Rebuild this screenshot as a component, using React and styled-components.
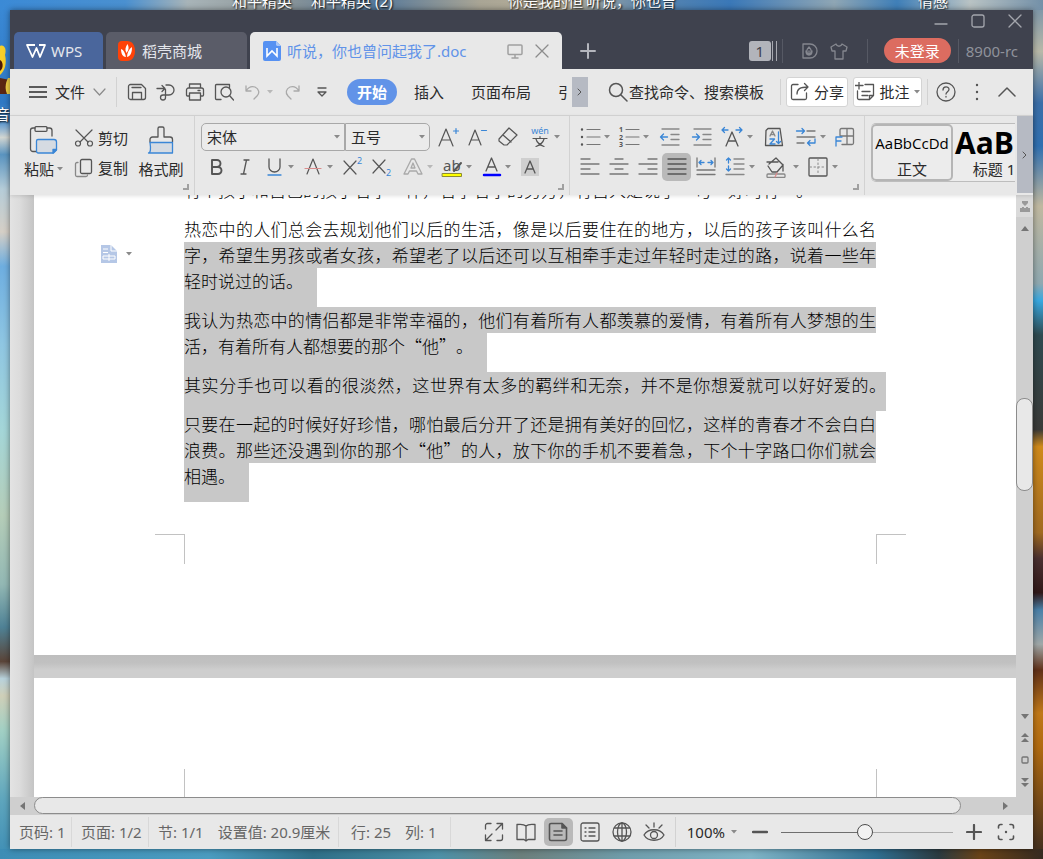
import React from 'react';
import styled, { createGlobalStyle, css } from 'styled-components';

const color = {
  titleBar: '#3f424e',
  chrome: '#e8e8e8',
  line: '#d2d2d2',
  ink: '#2b2b2b',
  icon: '#555',
  muted: '#a9a9a9',
  blue: '#3a86d6',
  accent: '#6193e8',
  pressed: '#b9b9b9',
  selection: '#c8c8c8',
};

const GlobalStyle = createGlobalStyle`
  *, *::before, *::after { box-sizing: border-box; }

  body {
    margin: 0;
    font-family: "Noto Sans", "Noto Sans CJK SC", sans-serif;
    font-size: 15px;
    line-height: 20px;
    color: ${color.ink};
  }

  button, input, select {
    font: inherit;
    color: inherit;
  }

  button {
    margin: 0;
    padding: 0;
    border: 0;
    background: none;
    white-space: nowrap;
    cursor: pointer;
  }

  svg { display: block; flex: none; }
`;

/* ---------- desktop and window ---------- */

const Desktop = styled.div`
  position: relative;
  min-height: 100vh;
  display: flex;
  padding: 10px;
  overflow: hidden;
  background:
    linear-gradient(90deg, #3b8ad6 0%, #4a90d0 12%, #a8b4b8 18%, #8d9698 27%, #55789a 36%, #a9a595 46%, #b8b09a 54%, #5c86ad 62%, #3a78b8 70%, #8fa6b4 80%, #3f7fb8 86%, #b9c3c4 93%, #7390a8 100%) top / 100% 10px no-repeat,
    linear-gradient(90deg, #3d8db5 0%, #4b9cc0 20%, #2f6f88 30%, #4d91a8 42%, #6c7f7c 50%, #6f9dab 60%, #7fb4c6 72%, #2f6e90 84%, #2b3a40 90%, #6a4318 94%, #352a20 100%) bottom / 100% 10px no-repeat,
    linear-gradient(180deg, #3b8ad6 0%, #2f78c4 12%, #4a8ecf 14%, #d2d6d2 16%, #5a94c0 18%, #b5ccd8 22%, #d5cfc6 27%, #6eaee0 31%, #8fc6e2 40%, #a4d6d8 50%, #b5cdb8 60%, #93b8b4 68%, #4f8296 73%, #5a4438 77%, #b8d2dc 79%, #cfcfb8 81%, #a2d0c4 85%, #5fa6bd 93%, #3d8db5 100%) left / 10px 100% no-repeat,
    linear-gradient(180deg, #7390a8 0%, #b8b8a8 6%, #3a6ea8 12%, #2f6fb0 17%, #c0b8a0 24%, #8fa8b0 33%, #38a8e0 35%, #2f4a50 39%, #3a3a38 50%, #d08a1a 52%, #a06a20 62%, #4a3030 65%, #301818 69%, #4a80a8 71%, #a0a8a8 75%, #603018 78%, #c07818 83%, #b06a10 87%, #3a2a20 100%) right / 10px 100% no-repeat,
    #3d8db5;
`;

const ShortcutLabel = styled.span`
  position: absolute;
  top: -9px;
  left: ${({ $left }) => $left};
  color: #fff;
  text-shadow: 1px 1px 2px #000;
  white-space: nowrap;
`;

const Sticker = styled.svg`
  position: absolute;
  top: 44px;
  left: 0;
`;

const SideLabel = styled(ShortcutLabel)`
  top: 104px;
`;

const AppWindow = styled.div`
  position: relative;
  flex: 1;
  min-width: 0;
  display: flex;
  flex-direction: column;
  background: ${color.chrome};
  box-shadow: 0 0 6px rgba(0, 0, 0, 0.45);
`;

const IconButton = styled.button`
  flex: none;
  display: flex;
  align-items: center;
  justify-content: center;
  width: ${({ $w }) => $w || 29}px;
  height: ${({ $h }) => $h || 28}px;
  color: ${({ $dim }) => ($dim ? color.muted : color.icon)};
  border-radius: 5px;
  ${({ $on }) => $on && css`background: ${color.pressed};`}
`;

const CaretButton = styled(IconButton)`
  width: 10px;
  justify-content: flex-start;
  opacity: ${({ $dim }) => ($dim ? 0.5 : 1)};
`;

const Divider = styled.span`
  flex: none;
  width: 1px;
  height: ${({ $h }) => $h || 30}px;
  background: ${({ $c }) => $c || color.line};
`;

/* ---------- title bar ---------- */

const TitleBar = styled.header`
  flex: none;
  background: ${color.titleBar};
`;

const WindowControls = styled.div`
  display: flex;
  justify-content: flex-end;

  button {
    width: 37px;
    height: 22px;
    color: #a4a6ad;
  }
`;

const TabStrip = styled.div`
  display: flex;
  gap: 3px;
  height: 37px;
  padding-left: 4px;
`;

const Tab = styled.button`
  flex: none;
  display: flex;
  align-items: center;
  gap: ${({ $gap }) => $gap}px;
  width: ${({ $w }) => $w}px;
  padding: 0 12px;
  border-radius: 5px 5px 0 0;
  background: ${({ $bg }) => $bg};
  color: #e4e6ec;
`;

const ActiveTab = styled.div`
  flex: none;
  display: flex;
  align-items: center;
  width: 312px;
  padding: 0 7px 0 13px;
  border-radius: 5px 5px 0 0;
  background: ${color.chrome};
  color: ${color.accent};

  span {
    flex: 1;
    padding-left: 6px;
    white-space: nowrap;
  }

  button { width: 27px; color: #8c8c8c; }
`;

const NewTab = styled(IconButton)`
  width: 46px;
  height: 37px;
  color: #b4b6bd;
`;

const Account = styled.div`
  display: flex;
  align-items: center;
  margin-left: auto;
  padding-right: 15px;
  color: #8f929b;

  button { color: #85878f; }
`;

const Extras = styled.div`
  display: flex;
  padding: 0 13px;
`;

const TabCount = styled.button`
  width: 22px;
  height: 20px;
  border-radius: 3px;
  background: #b2b4bb;

  && { color: ${color.titleBar}; }
`;

const CountBars = styled.span`
  width: 5px;
  height: 20px;
  margin: 0 5px 0 1px;
  border: solid #a6a8b0;
  border-width: 0 1px;
`;

const LoginButton = styled.button`
  width: 67px;
  height: 25px;
  margin: 0 7px 0 16px;
  border-radius: 13px;
  background: #dc6c60;

  && { color: #fff; }
`;

const Version = styled.span`
  padding-left: 7px;
`;

/* ---------- menu row ---------- */

const MenuRow = styled.div`
  flex: none;
  display: flex;
  align-items: center;
  height: 47px;
  padding-right: 9px;
  border-bottom: 1px solid #d6d6d6;
`;

const FileMenu = styled.button`
  flex: none;
  display: flex;
  align-items: center;
  gap: 8px;
  width: 106px;
  height: 30px;
  padding-left: 19px;
`;

const QuickAccess = styled.div`
  flex: none;
  display: flex;
  align-items: center;
  padding: 0 10px 0 5px;
`;

const RibbonTabs = styled.nav`
  flex: 1;
  min-width: 0;
  display: flex;
  align-items: center;
  gap: 27px;
  overflow: hidden;
`;

const CurrentTab = styled.button`
  flex: none;
  width: 50px;
  height: 26px;
  margin-right: -10px;
  border-radius: 13px;
  background: ${color.accent};
  color: #fff;
  font-weight: 700;
`;

const Scroller = styled.button`
  flex: none;
  display: flex;
  align-items: center;
  justify-content: center;
  width: 16px;
  height: ${({ $h }) => $h};
  margin-left: ${({ $ml }) => $ml || 0}px;
  background: #b6bac3;
  color: #555;
`;

const Search = styled.label`
  flex: none;
  display: flex;
  align-items: center;
  gap: 1px;
  width: 158px;
  margin: 0 14px 0 20px;
  color: ${color.icon};

  input {
    flex: 1;
    min-width: 0;
    padding: 0;
    border: 0;
    outline: 0;
    background: none;
    color: ${color.ink};
  }

  input::placeholder { color: ${color.ink}; opacity: 1; }
`;

const BoxButton = styled.button`
  flex: none;
  display: flex;
  align-items: center;
  justify-content: center;
  gap: 4px;
  width: ${({ $w }) => $w}px;
  height: 30px;
  margin-left: 5px;
  border: 1px solid #d4d4d4;
  border-radius: 3px;
  background: #fff;

  svg { color: ${color.icon}; }
`;

const RightMenu = styled.div`
  flex: none;
  display: flex;
  align-items: center;
  padding-left: 5px;
`;

/* ---------- ribbon ---------- */

const Ribbon = styled.div`
  flex: none;
  display: flex;
  height: 79px;
  position: relative;
  z-index: 1;
  background: ${color.chrome};
  box-shadow: 0 1px 4px rgba(0, 0, 0, 0.12);
`;

const Group = styled.div`
  flex: none;
  position: relative;
  display: flex;
  padding: 7px ${({ $pr }) => $pr || 0}px 0 ${({ $pl }) => $pl || 0}px;
  border-right: 1px solid ${color.line};
`;

const Launcher = styled.button`
  position: absolute;
  right: 5px;
  bottom: 5px;
  width: 6px;
  height: 6px;
  border: solid #a0a0a0;
  border-width: 0 2px 2px 0;
`;

const BigTool = styled.button`
  display: flex;
  flex-direction: column;
  align-items: center;
  gap: 5px;
  width: ${({ $w }) => $w}px;
  padding-top: 3px;
  color: ${color.icon};

  > span {
    display: flex;
    align-items: center;
    gap: 3px;
    color: ${color.ink};
  }
`;

const SmallTools = styled.div`
  padding-left: 7px;
`;

const SmallTool = styled.button`
  display: flex;
  align-items: center;
  gap: 4px;
  height: 30px;

  svg { color: ${color.icon}; }
`;

const Rows = styled.div`
  display: flex;
  flex-direction: column;
  gap: 2px;
`;

const Row = styled.div`
  display: flex;
  align-items: center;
  height: 28px;
`;

const Picker = styled.label`
  position: relative;
  flex: none;
  width: ${({ $w }) => $w}px;

  select {
    display: block;
    width: 100%;
    height: 28px;
    padding: 0 5px;
    appearance: none;
    border: 1px solid #a8a8a8;
    border-radius: ${({ $r }) => $r};
    background: #ebebeb;
    outline: 0;
  }

  & + & select {
    padding: 0 3px;
    border-left: 0;
  }

  svg {
    position: absolute;
    top: 12px;
    right: 5px;
  }
`;

const ToolSet = styled.div`
  display: flex;
  padding-left: 3px;
`;

const Styles = styled.div`
  flex: 1;
  min-width: 0;
  display: flex;
  height: 59px;
  margin: 7px 2px 0 6px;
  border: solid #bdbdbd;
  border-width: 1px 0;
  border-radius: 5px 0 0 5px;
  background: #ececec;
  overflow: hidden;
`;

const StyleCard = styled.button`
  flex: none;
  display: flex;
  flex-direction: column;
  align-items: center;
  width: 82px;
  border: ${({ $on }) => ($on ? '2px solid #b5b5b5' : '2px solid transparent')};
  border-radius: 5px;

  strong, em {
    display: flex;
    align-items: center;
    height: 33px;
    color: #000;
    font-family: "Open Sans", "Noto Sans", sans-serif;
    font-style: normal;
  }

  em { font-size: 15px; }
  strong { font-size: 30px; }
`;

/* ---------- document ---------- */

const Workspace = styled.main`
  flex: 1;
  min-height: 0;
  display: flex;
`;

const Gutter = styled.div`
  flex: none;
  width: 24px;
  background: linear-gradient(90deg, #e3e3e3 0%, #dcdcdc 40%, #c4c4c4 100%);
`;

const Pages = styled.div`
  flex: 1;
  min-width: 0;
  height: 602px;
  min-height: 100%;
  display: flex;
  flex-direction: column;
  overflow: hidden;
`;

const Page = styled.article`
  flex: ${({ $fill }) => ($fill ? '1' : 'none')};
  display: grid;
  grid-template-columns: 150px minmax(0, 1fr) 140px;
  background: #fff;
`;

const PageGap = styled.div`
  flex: none;
  height: 23px;
  background: linear-gradient(180deg, #bebebe 0%, #c1c1c1 35%, #cecece 65%);
`;

const PageMargin = styled.aside`
  padding: 50px 0 0 67px;
`;

const LayoutHint = styled.button`
  display: flex;
  align-items: center;
  gap: 8px;
`;

// pulled up because the view is scrolled part of a line into the page
const PageBody = styled.div`
  margin-top: -18px;
  padding-bottom: 91px;
  font-family: "Noto Sans CJK SC", sans-serif;
  font-size: 17px;
  font-weight: 300;
  line-height: 26px;
  text-spacing-trim: space-all;
  color: #000;
`;

const Line = styled.div`
  display: ${({ $short }) => ($short ? 'table' : 'block')};
  white-space: nowrap;
  text-align-last: ${({ $short }) => ($short ? 'left' : 'justify')};
  padding-right: ${({ $short }) => ($short ? 14 : 0)}px;
  padding-bottom: ${({ $last }) => ($last ? 13 : 0)}px;
  margin-right: ${({ $hang }) => ($hang ? '-10px' : 0)};
  background: ${({ $sel }) => ($sel ? color.selection : 'none')};
`;

const CropMarks = styled.div`
  display: flex;
  justify-content: space-between;
  margin: 32px -30px 0 -29px;

  &::before, &::after {
    content: '';
    width: 30px;
    height: 30px;
    border: solid #c2c2c2;
  }

  &::before { border-width: 1px 1px 0 0; }
  &::after { border-width: 1px 0 0 1px; }
`;

const TopMarks = styled.div`
  grid-column: 2;
  margin: 91px -1px 0 0;
  border: solid #c2c2c2;
  border-width: 0 1px;
`;

const VScroll = styled.div`
  flex: none;
  display: flex;
  flex-direction: column;
  align-items: center;
  width: 17px;
  padding-bottom: 4px;
  background: #cfcfcf;
  color: #757575;

  button { display: flex; justify-content: center; align-items: center; width: 17px; height: 22px; flex: none; }
  button:first-child { background: #dadada; color: #999; }
`;

const VTrack = styled.div`
  flex: 1;
  display: flex;
  flex-direction: column;

  &::before { content: ''; flex: 160; }
  &::after { content: ''; flex: 215; }
`;

const VThumb = styled.div`
  width: 17px;
  height: 93px;
  border: 1px solid #8c8c8c;
  border-radius: 8px;
  background: #e8e8e8;
`;

const HScroll = styled.div`
  flex: none;
  display: flex;
  align-items: flex-start;
  height: 18px;
  background: #cfcfcf;
  color: #757575;

  button { display: flex; justify-content: center; align-items: center; width: 24px; height: 17px; }
`;

const HThumb = styled.div`
  flex: 1;
  height: 17px;
  margin-right: 32px;
  border: 1px solid #8c8c8c;
  border-radius: 9px;
  background: #e8e8e8;
`;

const Corner = styled.span`
  width: 16px;
`;

/* ---------- status bar ---------- */

const StatusBar = styled.footer`
  flex: none;
  display: flex;
  align-items: center;
  height: 34px;
  padding-right: 11px;
  color: #666;
`;

const StatusItem = styled.span`
  flex: none;
  display: flex;
  align-items: center;
  gap: 14px;
  width: ${({ $w }) => $w}px;
  height: 30px;
  padding-left: ${({ $pl }) => $pl || 9}px;
  border-right: 1px solid #d8d8d8;
  white-space: nowrap;
`;

const Views = styled.div`
  display: flex;
  gap: 3px;
  margin-left: auto;
  padding-right: 6px;
`;

const ZoomLevel = styled.button`
  display: flex;
  align-items: center;
  gap: 6px;
  padding: 0 7px 0 11px;
  color: ${color.ink};
`;

const ZoomSlider = styled.input`
  flex: none;
  width: 172px;
  height: 18px;
  margin: 0 5px;
  appearance: none;
  background: linear-gradient(90deg, #6e6e6e 49%, #ababab 49%) center / 100% 1px no-repeat;

  &::-webkit-slider-thumb {
    appearance: none;
    width: 16px;
    height: 16px;
    border: 1px solid #4d4d4d;
    border-radius: 50%;
    background: #f2f2f2;
  }
`;

/* ---------- icons ---------- */

const Icon = ({ w = 22, h, sw = 1.3, children }) => (
  <svg
    width={w}
    height={h || w}
    viewBox={`0 0 ${w} ${h || w}`}
    fill="none"
    stroke="currentColor"
    strokeWidth={sw}
    strokeLinecap="round"
    strokeLinejoin="round"
    aria-hidden="true"
  >
    {children}
  </svg>
);

const CaretShape = () => (
  <svg width="6" height="4" viewBox="0 0 6 4" aria-hidden="true">
    <path d="M0 0h6L3 3.5z" fill="#8a8a8a" />
  </svg>
);

const Caret = ({ label, dim }) => (
  <CaretButton $dim={dim} aria-label={label}>
    <CaretShape />
  </CaretButton>
);

const Tool = ({ label, w, h, dim, on, icon }) => (
  <IconButton $w={w} $h={h} $dim={dim} $on={on} aria-label={label}>
    {icon}
  </IconButton>
);

const blue = { stroke: color.blue };

const icons = {
  minimize: <Icon w={14}><path d="M1 10h12" /></Icon>,
  maximize: <Icon w={14}><rect x="1" y="1" width="12" height="12" rx="2" /></Icon>,
  close: <Icon w={14}><path d="M1 1l12 12M13 1L1 13" /></Icon>,
  wps: (
    <svg width="20" height="14" viewBox="0 0 20 14" fill="none" stroke="#fff" strokeWidth="1.8" strokeLinejoin="round">
      <path d="M9 1H1l5.500 12L10.500 4l3.500 9 5-12h-6" />
    </svg>
  ),
  docer: (
    <svg width="18" height="20" viewBox="0 0 18 20">
      <path d="M4 0h5c5 0 8 4 8 10s-3 10-8 10H4a4 4 0 0 1-4-4V4a4 4 0 0 1 4-4z" fill="#ff4208" />
      <path d="M9.500 3c2 4 1 6-1 9-2-3-1-6 1-9zM3 8c3 1 4 4 5 8-3 0-5-3-5-8zM14 6c0 5-1 9-5 10 0-4 2-8 5-10z" fill="#fff" />
    </svg>
  ),
  writer: (
    <svg width="18" height="20" viewBox="0 0 18 20">
      <path d="M2 0h11l5 5v13a2 2 0 0 1-2 2H2a2 2 0 0 1-2-2V2a2 2 0 0 1 2-2z" fill="#5691f2" />
      <path d="M13 0v4l1 1h4z" fill="#a8c6f8" />
      <path d="M4 7v8l5-5 5 5V7" fill="none" stroke="#fff" strokeWidth="1.6" />
    </svg>
  ),
  monitor: <Icon w={16} sw={1.500}><rect x="1" y="2" width="14" height="9.500" rx="1" stroke="#a0a0a0" /><path d="M8 12v3M5 15h6" stroke="#a0a0a0" /></Icon>,
  plus: <Icon w={16} sw={2}><path d="M8 1v14M1 8h14" /></Icon>,
  leafD: (
    <Icon w={18}>
      <path d="M2 2h7a7 7 0 0 1 0 14H2z" />
      <path d="M8 5c3 3 3 5 0 8-3-3-3-5 0-8zM8 13V9M5 9c0 2 1 4 3 4s3-2 3-4" />
    </Icon>
  ),
  shirt: <Icon w={18}><path d="M6 2L1 5l1 4h3v8h8V9h3l1-4-5-3c-1 3-5 3-6 0z" /></Icon>,
  menu: <Icon w={18} h={14}><path d="M0 2h18M0 7h18M0 12h18" /></Icon>,
  down: <Icon w={13} h={8} sw={1.200}><path d="M1 1l5.500 6L12 1" stroke="#8a8a8a" /></Icon>,
  save: <Icon w={20}><path d="M1.500 4.500a2 2 0 0 1 2-2h11l4 4v9a2 2 0 0 1-2 2h-13a2 2 0 0 1-2-2zM5 5.500h9M5.500 17.500v-7h9v7" /></Icon>,
  share: <Icon w={20}><path d="M1 6.500h7M6 3.500l3 3-3 3M10 3h3a5 5 0 0 1 0 10H7a2.500 2.500 0 1 0 2.500 2.500V7.500" /></Icon>,
  print: <Icon w={20}><path d="M4.500 6V2h11v4M4.500 14h-2a1 1 0 0 1-1-1V8a2 2 0 0 1 2-2h13a2 2 0 0 1 2 2v5a1 1 0 0 1-1 1h-2M4.500 11h11v7h-11zM13 8.500h2" /></Icon>,
  preview: <Icon w={20}><path d="M7 17.500H2.500a1 1 0 0 1-1-1v-13a1 1 0 0 1 1-1h13v3" /><circle cx="12" cy="10" r="5" /><path d="M15.500 13.500l4 4.500" /></Icon>,
  undo: <Icon w={18}><path d="M2 3v5h5M2 8c3-5 6-5 9-4 4 2 5 6 2 9l-3 3" /></Icon>,
  redo: <Icon w={18}><path d="M16 3v5h-5M16 8c-3-5-6-5-9-4-4 2-5 6-2 9l3 3" /></Icon>,
  more: <Icon w={12}><path d="M2 2h8M2 6l4 4 4-4z" /></Icon>,
  right: <Icon w={6} h={8} sw={1}><path d="M1 1l3 3-3 3" /></Icon>,
  search: <Icon w={20} sw={1.500}><circle cx="8" cy="8" r="6.500" /><path d="M13 13l6 6" /></Icon>,
  export: <Icon w={20}><path d="M8 2.500H3a1.500 1.500 0 0 0-1.500 1.500v12A1.500 1.500 0 0 0 3 17.500h12a1.500 1.500 0 0 0 1.500-1.500v-5M7 12c0-5 3-7 11-7M14.500 1.500L18 5l-3.500 3.500" /></Icon>,
  comment: <Icon w={20}><path d="M10 2.500h8.500v11l-4 4H4a1.500 1.500 0 0 1-1.500-1.500V9M4 0v7M0 3.500h8M7 9.500h8M7 13.500h6M14.500 17v-3.500h4" /></Icon>,
  help: <Icon w={20}><circle cx="10" cy="10" r="9" /><path d="M7 8c0-4 6-4 6-.5 0 2-3 2.500-3 4.500M10 14.500v.5" /></Icon>,
  dots: <Icon w={4} h={18} sw={2.400}><path d="M2 2v.1M2 9v.1M2 16v.1" /></Icon>,
  up: <Icon w={18} h={10} sw={1.500}><path d="M1 9l8-8 8 8" /></Icon>,
  paste: (
    <Icon w={30} h={28}>
      <path d="M8 25.500H4a2.500 2.500 0 0 1-2.500-2.500V4.500A2.500 2.500 0 0 1 4 2h2M18 2h2.500A2.500 2.500 0 0 1 23 4.500V10" />
      <rect x="6" y="0.700" width="12" height="4.600" rx="1" />
      <path d="M9 13.500h16a2.500 2.500 0 0 1 2.500 2.500v8l-3 3H9A2 2 0 0 1 7.500 25V15A1.500 1.500 0 0 1 9 13.500z" fill="#d5dbe2" {...blue} />
      <path d="M24 27v-3.500h3.500z" fill={color.blue} {...blue} />
    </Icon>
  ),
  cut: <Icon w={20} sw={1.200}><path d="M2 2l12 12M18 2L6 14" /><circle cx="4" cy="15.500" r="2.500" /><circle cx="16" cy="15.500" r="2.500" /></Icon>,
  copy: <Icon w={20}><rect x="6.500" y="1.500" width="11" height="14" rx="1.500" /><path d="M4 4.500H3A1.500 1.500 0 0 0 1.500 6v11A1.500 1.500 0 0 0 3 18.500h9a1.500 1.500 0 0 0 1.500-1.500" stroke="#888" /></Icon>,
  brush: (
    <Icon w={28}>
      <path d="M3 16v-2.500A2.500 2.500 0 0 1 5.500 11H11V2.500A1.500 1.500 0 0 1 12.500 1h3A1.500 1.500 0 0 1 17 2.500V11h6a2.500 2.500 0 0 1 2.500 2.500V16" />
      <path d="M3 16.500h22.500V27H1.500c2 0 2.500-4 1.500-10.500z" fill="#d5dbe2" {...blue} />
    </Icon>
  ),
  grow: <Icon sw={1.200}><path d="M2 20L9 3l7 17M4.500 14h9" /><path d="M16.500 5h5M19 2.500v5" {...blue} /></Icon>,
  shrink: <Icon sw={1.200}><path d="M3 19L9 4l6 15M5 14h8" /><path d="M15.500 4.500h5" {...blue} /></Icon>,
  eraser: <Icon sw={1.200}><path d="M2 13L12 2l8 7-10 10H7l-5-4zM6 9l8 7" /></Icon>,
  pinyin: (
    <Icon h={22} sw={1.200}>
      <text x="11" y="8" textAnchor="middle" fontSize="9" fill={color.blue} stroke="none">wén</text>
      <path d="M4 12.500h14M11 10.500v2M7 13c1 4 4 6 8 7.500M15 13c-1 4-4 6-8 7.500" />
    </Icon>
  ),
  bold: <Icon sw={1.900}><path d="M7 4h5a3.500 3.500 0 0 1 0 7H7zM7 11h6a3.500 3.500 0 0 1 0 7H7z" /></Icon>,
  italic: <Icon><path d="M10 4h5M7 18h5M12.500 4l-3 14" /></Icon>,
  underline: <Icon><path d="M6 3v8a5.500 5 0 0 0 11 0V3" /><path d="M5 19h13" {...blue} /></Icon>,
  strike: <Icon sw={1.200}><path d="M5 18l6-15 6 15" /><path d="M3 12.500h16" stroke="#d98c8c" /></Icon>,
  superscript: <Icon sw={1.200}><path d="M3 5l12 13M15 5L3 18" /><text x="16" y="8" fontSize="9" fill={color.blue} stroke="none">2</text></Icon>,
  subscript: <Icon sw={1.200}><path d="M3 4l12 13M15 4L3 17" /><text x="16" y="20" fontSize="9" fill={color.blue} stroke="none">2</text></Icon>,
  effect: <Icon><path d="M2 18L9.500 3h3L20 18h-4l-1.500-3h-7L6 18zM9 12l2-5 2 5z" /></Icon>,
  highlight: (
    <Icon h={22}>
      <text x="2" y="15" fontSize="15" fill={color.icon} stroke="none">ab</text>
      <path d="M13 15l7-8" strokeWidth="2" />
      <rect x="1.500" y="17.500" width="19" height="3" fill="#ff0" stroke="#8c8c30" strokeWidth="1" />
    </Icon>
  ),
  fontColor: <Icon><path d="M6 15l5.500-13L17 15M8 11h7" /><path d="M4 19h16" stroke="#00f" strokeWidth="2.500" /></Icon>,
  shading: <Icon w={20}><rect x="1" y="1" width="18" height="18" fill="#cfcfcf" stroke="none" /><path d="M5 16l5-12 5 12M7 12h6" /></Icon>,
  bullets: <Icon sw={1.200}><path d="M8 3.500h13M8 11h13M8 18.500h13" stroke="#777" /><path d="M3 3.500v.1M3 11v.1M3 18.500v.1" strokeWidth="2.400" /></Icon>,
  numbering: (
    <Icon sw={1.200}>
      <path d="M8 3.500h13M8 11h13M8 18.500h13" stroke="#777" />
      <g fontSize="7" fontWeight="700" fill={color.icon} stroke="none"><text x="1" y="6">1</text><text x="1" y="13.500">2</text><text x="1" y="21">3</text></g>
    </Icon>
  ),
  outdent: <Icon><path d="M3 3h17M12 8.500h8M12 13.500h8M3 19h17" stroke="#888" /><path d="M1.500 11h7M4.500 8l-3 3 3 3" {...blue} /></Icon>,
  indent: <Icon><path d="M3 3h17M12 8.500h8M12 13.500h8M3 19h17" stroke="#888" /><path d="M1.500 11h7M5.500 8l3 3-3 3" {...blue} /></Icon>,
  spacing: <Icon><path d="M5 20l6-14 6 14M7 15h8" /><path d="M1 4h6M3.500 1.500L1 4l2.500 2.500M15 4h6M18.500 1.500L21 4l-2.500 2.500" {...blue} /></Icon>,
  sort: (
    <Icon>
      <path d="M5 2.500h12l2.500 17h-17L3 4.500z" />
      <path d="M7 10l2.500-5 2.500 5M7.500 8.500h4" stroke="#888" />
      <path d="M7 13h4.500L7 18h5M15.500 6v11.500M13.500 15.500l2 2 2-2" {...blue} />
    </Icon>
  ),
  wrap: <Icon><path d="M12 5h8M2 11h18M2 17h7" stroke="#777" /><path d="M1.500 5h8M7 2.500L9.500 5 7 7.500M20 13v4h-7M15 14.500L12.500 17l2.500 2.500" {...blue} /></Icon>,
  table: <Icon><path d="M6 9V4a1.500 1.500 0 0 1 1.500-1.500H18A1.500 1.500 0 0 1 19.500 4v13a1.500 1.500 0 0 1-1.500 1.500H8M13 2.500v16M6 10h13.500" stroke="#777" /><path d="M2 20v-9h6M2 15h5" {...blue} /></Icon>,
  left: <Icon><path d="M2 3h9M2 8h18M2 13h9M2 18h18" stroke="#777" /></Icon>,
  center: <Icon><path d="M7 3h8M2 8h18M7 13h8M2 18h18" stroke="#777" /></Icon>,
  alignRight: <Icon><path d="M11 3h9M2 8h18M11 13h9M2 18h18" stroke="#777" /></Icon>,
  justify: <Icon><path d="M2 3h18M2 8h18M2 13h18M2 18h18" /></Icon>,
  distribute: <Icon><path d="M2 2v9M20 2v9M2 14h18M2 18.500h18" stroke="#777" /><path d="M4 6.500h5M6 4.500l-2 2 2 2M13 6.500h5M16 4.500l2 2-2 2" {...blue} /></Icon>,
  lineHeight: <Icon><path d="M10 3h10M10 8h10M10 13h10M2 18.500h18" stroke="#888" /><path d="M4.500 2v5M2.500 4l2-2 2 2M4.500 10v5M2.500 13l2 2 2-2" {...blue} /></Icon>,
  fill: (
    <Icon>
      <path d="M2 6h11M4 8l7-6 7 7-6 7H7L3 10M18 8.500v6.500" />
      <rect x="2" y="18" width="18" height="3.500" rx="1" stroke="#888" />
      <path d="M10 21l2-4" stroke="#d98c8c" />
    </Icon>
  ),
  border: <Icon><rect x="2" y="2" width="18" height="18" rx="1" /><path d="M11 3v16M3 11h16" stroke="#888" strokeWidth="1" strokeDasharray="1.500 2.500" /></Icon>,
  layoutHint: (
    <svg width="17" height="18" viewBox="0 0 17 18">
      <path d="M0 0h10l6 6v12H0z" fill="#b5c7e6" />
      <path d="M10 0v6h6M2 4h5M2 7.500h5M2 11h12v3H2zM8 9v7" stroke="#fff" fill="none" />
    </svg>
  ),
  tipUp: <svg width="8" height="5" viewBox="0 0 8 5"><path d="M0 5l4-5 4 5z" fill="currentColor" /></svg>,
  tipDown: <svg width="8" height="5" viewBox="0 0 8 5"><path d="M0 0h8L4 5z" fill="currentColor" /></svg>,
  tipLeft: <svg width="5" height="8" viewBox="0 0 5 8"><path d="M5 0v8L0 4z" fill="currentColor" /></svg>,
  tipRight: <svg width="5" height="8" viewBox="0 0 5 8"><path d="M0 0l5 4-5 4z" fill="currentColor" /></svg>,
  prevPage: <svg width="8" height="10" viewBox="0 0 8 10"><path d="M0 4l4-4 4 4zM0 9l4-4 4 4z" fill="currentColor" /></svg>,
  nextPage: <svg width="8" height="10" viewBox="0 0 8 10"><path d="M0 1h8L4 5zM0 6h8l-4 4z" fill="currentColor" /></svg>,
  target: <Icon w={8}><rect x="1" y="1" width="6" height="6" rx="1" /></Icon>,
  ruler: <svg width="10" height="11" viewBox="0 0 10 11"><path d="M2 0h6v2L5 5 2 2zM0 7h2V6h2v1h2V6h2v1h2v4H0z" fill="currentColor" /></svg>,
  fullscreen: <Icon w={20}><path d="M1.500 7V3.500a2 2 0 0 1 2-2H7M13 18.500h3.500a2 2 0 0 0 2-2V13M13 1.500h5.500V7M18 2l-6 6M7 18.500H1.500V13M2 18l6-6" /></Icon>,
  book: <Icon w={20}><path d="M10 4v14M10 4C8 2 5 2 1 2.500v15h7l2 1.500 2-1.500h7v-15C15 2 12 2 10 4z" /></Icon>,
  pageView: <Icon w={20} sw={1.600}><path d="M3 1.500h11l4.500 4.500v10.500a2 2 0 0 1-2 2H3a1.500 1.500 0 0 1-1.500-1.500V3A1.500 1.500 0 0 1 3 1.500zM6 9h8M6 13h8" /><path d="M14 1.500V6h4.500z" fill="currentColor" /></Icon>,
  outline: <Icon w={20}><rect x="1" y="1" width="18" height="18" rx="2" /><path d="M9 6h6M9 10h6M9 14h6M5 6h1M5 10h1M5 14h1" /></Icon>,
  globe: <Icon w={20}><circle cx="10" cy="10" r="9" /><ellipse cx="10" cy="10" rx="4.500" ry="9" /><path d="M10 1v18M2.500 6h15M2.500 14h15" /></Icon>,
  eye: <Icon><path d="M1 14c4-7 16-7 20 0-4 7-16 7-20 0z" /><circle cx="11" cy="14" r="3.500" /><path d="M11 2v4M3 4l3 3M19 4l-3 3" /></Icon>,
  minus: <Icon w={16} sw={2.400}><path d="M1 8h14" /></Icon>,
  zoomIn: <Icon w={16} sw={2.200}><path d="M1 8h14M8 1v14" /></Icon>,
  fit: (
    <Icon w={18} sw={1.600}>
      <path d="M1.500 5V3.500a2 2 0 0 1 2-2H5M13 1.500h1.500a2 2 0 0 1 2 2V5M16.500 13v1.500a2 2 0 0 1-2 2H13M5 16.500H3.500a2 2 0 0 1-2-2V13" />
      <circle cx="9" cy="9" r="1.200" fill="currentColor" stroke="none" />
    </Icon>
  ),
};

/* ---------- content ---------- */

const paragraphs = [
  [{ text: '有个孩子和自己的孩子名字一样，名字名字的男方，有自人是说了一句“好呵有”。', last: true, short: true }],
  [
    { text: '热恋中的人们总会去规划他们以后的生活，像是以后要住在的地方，以后的孩子该叫什么名' },
    { text: '字，希望生男孩或者女孩，希望老了以后还可以互相牵手走过年轻时走过的路，说着一些年', sel: true },
    { text: '轻时说过的话。', sel: true, short: true, last: true },
  ],
  [
    { text: '我认为热恋中的情侣都是非常幸福的，他们有着所有人都羡慕的爱情，有着所有人梦想的生', sel: true },
    { text: '活，有着所有人都想要的那个“他”。', sel: true, short: true, last: true },
  ],
  [{ text: '其实分手也可以看的很淡然，这世界有太多的羁绊和无奈，并不是你想爱就可以好好爱的。', sel: true, last: true, hang: true }],
  [
    { text: '只要在一起的时候好好珍惜，哪怕最后分开了还是拥有美好的回忆，这样的青春才不会白白', sel: true },
    { text: '浪费。那些还没遇到你的那个“他”的人，放下你的手机不要着急，下个十字路口你们就会', sel: true },
    { text: '相遇。', sel: true, short: true, last: true },
  ],
];

const Title = () => (
  <TitleBar>
    <WindowControls>
      <IconButton aria-label="最小化">{icons.minimize}</IconButton>
      <IconButton aria-label="最大化">{icons.maximize}</IconButton>
      <IconButton aria-label="关闭">{icons.close}</IconButton>
    </WindowControls>
    <TabStrip>
      <Tab $w={89} $gap={5} $bg="#4a669c">{icons.wps}WPS</Tab>
      <Tab $w={141} $gap={6} $bg="#5a5c68">{icons.docer}稻壳商城</Tab>
      <ActiveTab>
        {icons.writer}
        <span>听说，你也曾问起我了.doc</span>
        <IconButton aria-label="演示">{icons.monitor}</IconButton>
        <IconButton aria-label="关闭标签">{icons.close}</IconButton>
      </ActiveTab>
      <NewTab aria-label="新建">{icons.plus}</NewTab>
      <Account>
        <TabCount>1</TabCount>
        <CountBars />
        <Divider $h={24} $c="#565964" />
        <Extras>
          <Tool label="稻壳" icon={icons.leafD} />
          <Tool label="皮肤" icon={icons.shirt} />
        </Extras>
        <Divider $h={24} $c="#565964" />
        <LoginButton>未登录</LoginButton>
        <Divider $h={24} $c="#565964" />
        <Version>8900-rc</Version>
      </Account>
    </TabStrip>
  </TitleBar>
);

const Menu = () => (
  <MenuRow>
    <FileMenu>{icons.menu}文件{icons.down}</FileMenu>
    <Divider />
    <QuickAccess>
      <Tool label="保存" icon={icons.save} />
      <Tool label="输出" icon={icons.share} />
      <Tool label="打印" icon={icons.print} />
      <Tool label="打印预览" icon={icons.preview} />
      <Tool label="撤销" dim icon={icons.undo} />
      <Caret label="撤销列表" dim />
      <Tool label="恢复" dim icon={icons.redo} />
      <Tool label="更多" w={31} icon={icons.more} />
    </QuickAccess>
    <RibbonTabs>
      <CurrentTab>开始</CurrentTab>
      <button>插入</button>
      <button>页面布局</button>
      <button>引用</button>
    </RibbonTabs>
    <Scroller $h="30px" $ml={4} aria-label="更多选项卡">{icons.right}</Scroller>
    <Search>
      {icons.search}
      <input aria-label="搜索" placeholder="查找命令、搜索模板" />
    </Search>
    <Divider $h={26} />
    <BoxButton $w={62}>{icons.export}分享</BoxButton>
    <BoxButton $w={69}>{icons.comment}批注<CaretShape /></BoxButton>
    <RightMenu>
      <Divider $h={26} />
      <Tool label="帮助" w={36} icon={icons.help} />
      <Tool label="选项" w={26} icon={icons.dots} />
      <Tool label="收起功能区" w={34} icon={icons.up} />
    </RightMenu>
  </MenuRow>
);

const ClipboardGroup = () => (
  <Group $pl={10}>
    <BigTool $w={47}>
      {icons.paste}
      <span>粘贴<CaretShape /></span>
    </BigTool>
    <SmallTools>
      <SmallTool>{icons.cut}剪切</SmallTool>
      <SmallTool>{icons.copy}复制</SmallTool>
    </SmallTools>
    <BigTool $w={66}>
      {icons.brush}
      <span>格式刷</span>
    </BigTool>
    <Launcher aria-label="剪贴板设置" />
  </Group>
);

const FontGroup = () => (
  <Group $pl={6} $pr={5}>
    <Rows>
      <Row>
        <Picker $w={144} $r="5px 0 0 5px">
          <select aria-label="字体" defaultValue="宋体"><option>宋体</option></select>
          <CaretShape />
        </Picker>
        <Picker $w={85} $r="0 5px 5px 0">
          <select aria-label="字号" defaultValue="五号"><option>五号</option></select>
          <CaretShape />
        </Picker>
        <ToolSet>
          <Tool label="增大字号" icon={icons.grow} />
          <Tool label="减小字号" icon={icons.shrink} />
          <Tool label="清除格式" w={34} icon={icons.eraser} />
          <Tool label="拼音指南" icon={icons.pinyin} />
          <Caret label="拼音选项" />
        </ToolSet>
      </Row>
      <Row>
        <Tool label="加粗" icon={icons.bold} />
        <Tool label="倾斜" icon={icons.italic} />
        <Tool label="下划线" icon={icons.underline} />
        <Caret label="下划线选项" />
        <Tool label="删除线" icon={icons.strike} />
        <Caret label="删除线选项" />
        <Tool label="上标" icon={icons.superscript} />
        <Tool label="下标" icon={icons.subscript} />
        <ToolSet>
          <Tool label="文字效果" dim icon={icons.effect} />
          <Caret label="文字效果选项" dim />
          <Tool label="突出显示" icon={icons.highlight} />
          <Caret label="突出显示选项" />
          <Tool label="字体颜色" icon={icons.fontColor} />
          <Caret label="字体颜色选项" />
          <Tool label="字符底纹" icon={icons.shading} />
        </ToolSet>
      </Row>
    </Rows>
    <Launcher aria-label="字体设置" />
  </Group>
);

const ParagraphGroup = () => (
  <Group $pl={5} $pr={5}>
    <Rows>
      <Row>
        <Tool label="项目符号" icon={icons.bullets} />
        <Caret label="项目符号选项" />
        <Tool label="编号" icon={icons.numbering} />
        <Caret label="编号选项" />
        <Tool label="减少缩进" w={34} icon={icons.outdent} />
        <Tool label="增加缩进" icon={icons.indent} />
        <Tool label="中文版式" w={31} icon={icons.spacing} />
        <Caret label="中文版式选项" />
        <Tool label="排序" w={34} icon={icons.sort} />
        <Tool label="换行" icon={icons.wrap} />
        <Caret label="换行选项" />
        <Tool label="表格" icon={icons.table} />
      </Row>
      <Row>
        <Tool label="左对齐" icon={icons.left} />
        <Tool label="居中" icon={icons.center} />
        <Tool label="右对齐" icon={icons.alignRight} />
        <Tool label="两端对齐" on icon={icons.justify} />
        <Tool label="分散对齐" icon={icons.distribute} />
        <Tool label="行距" icon={icons.lineHeight} />
        <Caret label="行距选项" />
        <Tool label="底纹" w={34} icon={icons.fill} />
        <Caret label="底纹选项" />
        <Tool label="边框" icon={icons.border} />
        <Caret label="边框选项" />
      </Row>
    </Rows>
    <Launcher aria-label="段落设置" />
  </Group>
);

const Document = () => (
  <Workspace>
    <Gutter />
    <Pages>
      <Page>
        <PageMargin>
          <LayoutHint aria-label="版式">{icons.layoutHint}<CaretShape /></LayoutHint>
        </PageMargin>
        <PageBody lang="zh-CN">
          {paragraphs.map((lines, i) => (
            <div key={i}>
              {lines.map(({ text, sel, short, last, hang }) => (
                <Line key={text} $sel={sel} $short={short} $last={last} $hang={hang}>{text}</Line>
              ))}
            </div>
          ))}
          <CropMarks />
        </PageBody>
      </Page>
      <PageGap />
      <Page $fill>
        <TopMarks />
      </Page>
    </Pages>
    <VScroll>
      <button aria-label="标尺">{icons.ruler}</button>
      <button aria-label="向上">{icons.tipUp}</button>
      <VTrack><VThumb /></VTrack>
      <button aria-label="向下">{icons.tipDown}</button>
      <button aria-label="上一页">{icons.prevPage}</button>
      <button aria-label="选择浏览对象">{icons.target}</button>
      <button aria-label="下一页">{icons.nextPage}</button>
    </VScroll>
  </Workspace>
);

const Status = () => (
  <StatusBar>
    <StatusItem $w={62}>页码: 1</StatusItem>
    <StatusItem $w={77}>页面: 1/2</StatusItem>
    <StatusItem $w={190}><span>节: 1/1</span><span>设置值: 20.9厘米</span></StatusItem>
    <StatusItem $w={112} $pl={12}><span>行: 25</span><span>列: 1</span></StatusItem>
    <Views>
      <Tool label="全屏" icon={icons.fullscreen} />
      <Tool label="阅读版式" icon={icons.book} />
      <Tool label="页面视图" on icon={icons.pageView} />
      <Tool label="大纲" icon={icons.outline} />
      <Tool label="Web 版式" icon={icons.globe} />
      <Tool label="护眼模式" icon={icons.eye} />
    </Views>
    <Divider />
    <ZoomLevel>100%<CaretShape /></ZoomLevel>
    <Tool label="缩小" w={32} icon={icons.minus} />
    <ZoomSlider type="range" min="0" max="100" defaultValue="49" aria-label="显示比例" />
    <Tool label="放大" w={32} icon={icons.zoomIn} />
    <Tool label="最佳显示比例" w={32} icon={icons.fit} />
  </StatusBar>
);

export default function App() {
  return (
    <>
      <GlobalStyle />
      <Desktop>
        <ShortcutLabel $left="232px">和平精英</ShortcutLabel>
        <ShortcutLabel $left="311px">和平精英 (2)</ShortcutLabel>
        <ShortcutLabel $left="508px">你是我的恒</ShortcutLabel>
        <ShortcutLabel $left="586px">听说，你也曾</ShortcutLabel>
        <ShortcutLabel $left="918px">情感</ShortcutLabel>
        <Sticker width="10" height="52" viewBox="0 0 10 52">
          <path d="M0 2c4-2 7 3 5 9 2 8 0 16-5 20z" fill="#f7cf2a" />
          <path d="M0 16c3 1 4 8 0 11z" fill="#4a1a08" />
          <path d="M0 34l10 2v14H0z" fill="#5a2512" />
          <path d="M8 34h2v16H7c-2-5-2-10 1-16z" fill="#f0cf45" />
        </Sticker>
        <SideLabel $left="-5px">音</SideLabel>
        <AppWindow>
          <Title />
          <Menu />
          <Ribbon>
            <ClipboardGroup />
            <FontGroup />
            <ParagraphGroup />
            <Styles>
              <StyleCard $on><em>AaBbCcDd</em>正文</StyleCard>
              <StyleCard><strong>AaBb</strong>标题 1</StyleCard>
            </Styles>
            <Scroller $h="77px" aria-label="更多样式">{icons.right}</Scroller>
          </Ribbon>
          <Document />
          <HScroll>
            <button aria-label="向左">{icons.tipLeft}</button>
            <HThumb />
            <button aria-label="向右">{icons.tipRight}</button>
            <Corner />
          </HScroll>
          <Status />
        </AppWindow>
      </Desktop>
    </>
  );
}
